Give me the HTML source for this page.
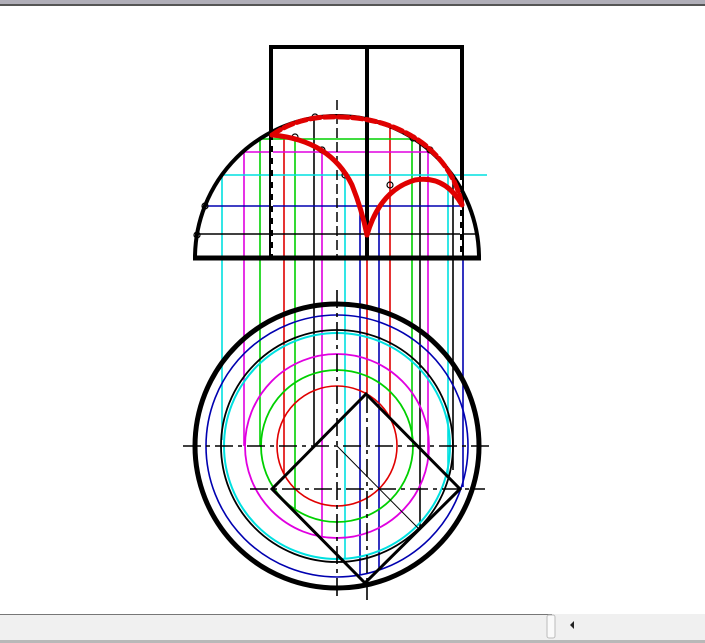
<!DOCTYPE html>
<html><head><style>
html,body{margin:0;padding:0;width:705px;height:643px;overflow:hidden;background:#fff}
</style></head><body>
<svg width="705" height="643" viewBox="0 0 705 643" xmlns="http://www.w3.org/2000/svg" style="display:block">
<rect x="0" y="0" width="705" height="4" fill="#b0aeb8"/>
<rect x="0" y="4" width="705" height="2" fill="#555"/>
<!-- vertical projection lines -->
<g stroke-width="1.6" fill="none">
<line x1="222" y1="175" x2="222" y2="440" stroke="#00e0e0"/>
<line x1="244" y1="152" x2="244" y2="446" stroke="#e000e0"/>
<line x1="260" y1="139" x2="260" y2="446" stroke="#00d000"/>
<line x1="284" y1="135" x2="284" y2="474" stroke="#e00000"/>
<line x1="295" y1="139" x2="295" y2="509" stroke="#00d000"/>
<line x1="314" y1="120" x2="314" y2="446" stroke="#000"/>
<line x1="322" y1="152" x2="322" y2="537" stroke="#e000e0"/>
<line x1="345" y1="175" x2="345" y2="559" stroke="#00e0e0"/>
<line x1="360" y1="206" x2="360" y2="575" stroke="#0000b0"/>
<line x1="367" y1="235" x2="367" y2="394" stroke="#e00000"/>
<line x1="379" y1="206" x2="379" y2="570" stroke="#0000b0"/>
<line x1="390" y1="125" x2="390" y2="418" stroke="#e00000"/>
<line x1="412" y1="139" x2="412" y2="440" stroke="#00d000"/>
<line x1="420" y1="140" x2="420" y2="530" stroke="#000"/>
<line x1="428" y1="152" x2="428" y2="455" stroke="#e000e0"/>
<line x1="448" y1="175" x2="448" y2="477" stroke="#00e0e0"/>
<line x1="453" y1="175" x2="453" y2="470" stroke="#000"/>
<line x1="463" y1="206" x2="463" y2="487" stroke="#0000b0"/>
<!-- horizontals top view -->
<line x1="260" y1="139" x2="412" y2="139" stroke="#00d000"/>
<line x1="244" y1="152" x2="428" y2="152" stroke="#e000e0"/>
<line x1="222" y1="175" x2="487" y2="175" stroke="#00e0e0"/>
<line x1="203" y1="206" x2="463" y2="206" stroke="#0000b0"/>
<line x1="195" y1="234" x2="478" y2="234" stroke="#000"/>
</g>
<!-- top view -->
<g stroke="#000" fill="none">
<rect x="271" y="47" width="191" height="211" stroke-width="4"/>
<line x1="367" y1="47" x2="367" y2="258" stroke-width="4"/>
<line x1="272" y1="140" x2="272" y2="258" stroke="#fff" stroke-width="2" stroke-dasharray="6 6"/>
<line x1="461" y1="180" x2="461" y2="258" stroke="#fff" stroke-width="2" stroke-dasharray="6 6"/>
<path d="M195 258 A142 142 0 0 1 479 258" stroke-width="4"/>
<line x1="193" y1="258" x2="481" y2="258" stroke-width="5"/>
<line x1="337" y1="100" x2="337" y2="258" stroke-width="1.5" stroke-dasharray="10 4"/>
<circle cx="197" cy="235" r="3" stroke-width="1.2"/>
<circle cx="205" cy="206" r="3" stroke-width="1.2"/>
<circle cx="315" cy="117" r="3" stroke-width="1.2"/>
<circle cx="295" cy="137" r="3" stroke-width="1.2"/>
<circle cx="322" cy="150" r="3" stroke-width="1.2"/>
<circle cx="345" cy="175" r="3" stroke-width="1.2"/>
<circle cx="413" cy="138" r="3" stroke-width="1.2"/>
<circle cx="430" cy="150" r="3" stroke-width="1.2"/>
<circle cx="390" cy="185" r="3" stroke-width="1.2"/>
</g>
<!-- red curves -->
<g stroke="#e00000" fill="none" stroke-width="5" stroke-linecap="round">
<path d="M272 135 Q300 115 340 117 Q390 118 425 145 Q455 170 462 205" stroke-dasharray="10 4"/>
<path d="M272 135 Q330 140 352 185 Q362 210 367 235"/>
<path d="M367 235 Q380 190 415 180 Q445 175 462 205"/>
</g>
<!-- bottom view circles -->
<g fill="none">
<circle cx="337" cy="446" r="142" stroke="#000" stroke-width="5"/>
<circle cx="337" cy="446" r="131" stroke="#0000b0" stroke-width="1.6"/>
<circle cx="337" cy="446" r="116" stroke="#000" stroke-width="1.8"/>
<circle cx="337" cy="446" r="113" stroke="#00e0e0" stroke-width="2"/>
<circle cx="337" cy="446" r="92" stroke="#e000e0" stroke-width="1.8"/>
<circle cx="337" cy="446" r="76" stroke="#00d000" stroke-width="1.8"/>
<circle cx="337" cy="446" r="60" stroke="#e00000" stroke-width="1.6"/>
</g>
<g stroke="#000" fill="none">
<line x1="183" y1="446" x2="492" y2="446" stroke-width="1.6" stroke-dasharray="18 5 4 5"/>
<line x1="250" y1="489" x2="485" y2="489" stroke-width="1.6" stroke-dasharray="18 5 4 5"/>
<line x1="337" y1="290" x2="337" y2="600" stroke-width="1.6" stroke-dasharray="18 5 4 5"/>
<line x1="367" y1="395" x2="367" y2="600" stroke-width="1.6" stroke-dasharray="18 5 4 5"/>
<path d="M366 394 L460 489 L365 583 L272 489 Z" stroke-width="3"/>
<line x1="337" y1="446" x2="420" y2="530" stroke-width="1"/>
</g>
<!-- scrollbar -->
<rect x="0" y="614" width="705" height="26" fill="#f0f0f0"/>
<line x1="0" y1="614.5" x2="552" y2="614.5" stroke="#777"/>
<rect x="547" y="615" width="8" height="23" rx="2" fill="#fafafa" stroke="#bbb"/>
<path d="M574 621 L570 625 L574 629 Z" fill="#222"/>
<rect x="0" y="640" width="705" height="3" fill="#b8b8b8"/>
</svg>
</body></html>
